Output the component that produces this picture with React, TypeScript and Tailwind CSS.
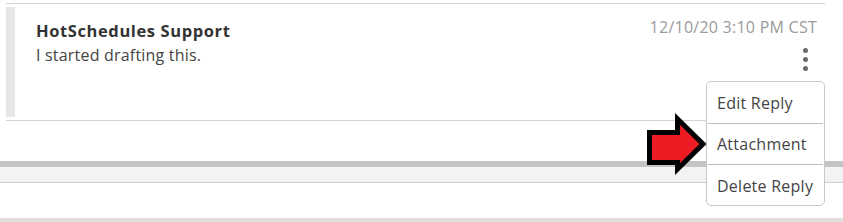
import React from "react";

export default function App() {
  return (
    <div className="relative w-[843px] h-[222px] overflow-hidden bg-white font-['Open_Sans',sans-serif]">
      <div className="pt-[3px] pl-[6px] pr-[18px] h-[161px]">
        <div className="border-t border-b border-[#d2d2d2] pt-[3px] pb-[3px]">
          <div className="flex h-[110px]">
            <div className="w-[9px] bg-[#e6e6e6]" />
            <div className="flex flex-1 justify-between pl-[21px] pr-[8px]">
              <div className="pt-[12px] leading-[24px]">
                <div className="font-bold text-[16.5px] tracking-[0.6px] text-[#333333]">HotSchedules Support</div>
                <div className="text-[16px] tracking-[0.2px] text-[#444444]">I started drafting this.</div>
              </div>
              <div className="flex flex-col items-end pt-[8px]">
                <div className="text-[16px] leading-[24px] tracking-[0.25px] text-[#9a9a9a]">12/10/20 3:10 PM CST</div>
                <div className="mt-[9px] mr-[9px] flex flex-col items-center gap-[4px]">
                  <span className="block w-[5px] h-[5px] rounded-full bg-[#6a6a6a]" />
                  <span className="block w-[5px] h-[5px] rounded-full bg-[#6a6a6a]" />
                  <span className="block w-[5px] h-[5px] rounded-full bg-[#6a6a6a]" />
                </div>
              </div>
            </div>
          </div>
        </div>
      </div>
      <div className="h-[6px] bg-[#c4c4c4]" />
      <div className="h-[15px] bg-[#f3f3f3] border-b border-[#cccccc] box-content" />
      <div className="h-[35px] bg-white" />
      <div className="h-[10px] bg-[#e0e0e0]" />

      <svg
        className="absolute left-[645px] top-[110px]"
        width="66"
        height="68"
        viewBox="645 110 66 68"
      >
        <polygon
          points="649.5,132.5 677.5,132.5 677.5,119 703,144 677.5,169 677.5,162.5 649.5,162.5"
          fill="#ed1c24"
          stroke="#000"
          strokeWidth="5"
          strokeLinejoin="miter"
        />
      </svg>

      <div className="absolute left-[706px] top-[81px] w-[119px] h-[125px] rounded-[5px] border border-[#c8c8c8] bg-white text-[16px] leading-[24px] tracking-[0.25px] text-[#444444]">
        <div className="flex h-[41px] items-center pl-[10px]">Edit Reply</div>
        <div className="mx-[1px] h-px bg-[#bdbdbd]" />
        <div className="flex h-[40px] items-center pl-[10px]">Attachment</div>
        <div className="mx-[1px] h-px bg-[#bdbdbd]" />
        <div className="flex h-[41px] items-center pl-[10px]">Delete Reply</div>
      </div>
    </div>
  );
}
